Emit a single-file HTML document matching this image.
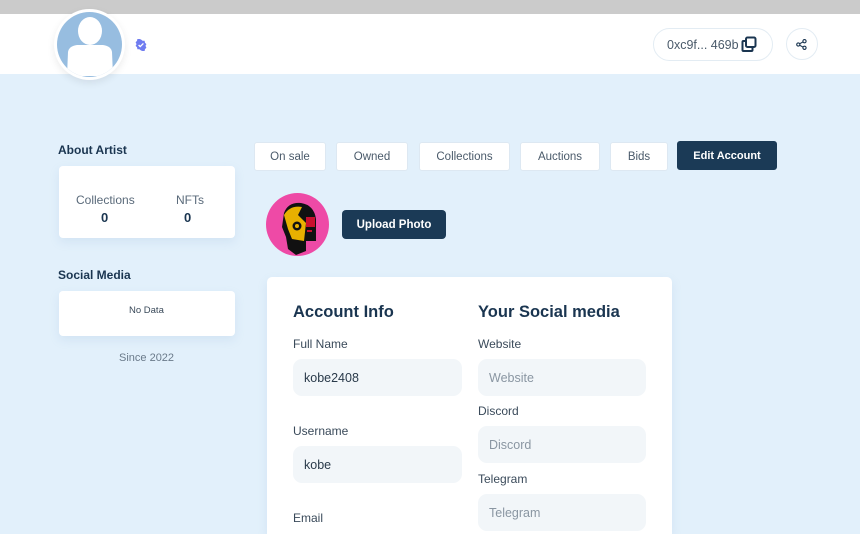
<!DOCTYPE html>
<html><head><meta charset="utf-8"><style>
*{box-sizing:border-box;margin:0;padding:0}
html,body{width:860px;height:534px;overflow:hidden}
body{background:#e2f0fb;font-family:"Liberation Sans",sans-serif;position:relative;color:#1a3550}
.a{position:absolute}
.top{left:0;top:0;width:860px;height:14px;background:#cbcbcb}
.hdr{left:0;top:14px;width:860px;height:60px;background:#fff}
.card{background:#fff;border-radius:4px;box-shadow:0 4px 10px rgba(120,160,200,.15)}
.tab{top:142px;height:29px;background:#fff;border-radius:3px;font-size:11.5px;color:#4a5a6a;display:flex;align-items:center;justify-content:center;border:1px solid #dde8f2}
.lbl{font-size:12px;color:#3a4a5a}
.inp{background:#f2f6f9;border-radius:9px;height:37px;font-size:12.5px;display:flex;align-items:center;padding-left:11px;color:#2a3a4a}
.ph{color:#8a96a2}
</style></head><body>
<div class="a top"></div>
<div class="a hdr"></div>
<div class="a" style="left:54px;top:9px;width:71px;height:71px;border-radius:50%;background:#fff;box-shadow:0 3px 8px rgba(0,0,0,.08)"></div>
<svg class="a" style="left:57px;top:12px" width="65" height="65" viewBox="0 0 65 65"><defs><clipPath id="c"><circle cx="32.5" cy="32.5" r="32.5"/></clipPath></defs><circle cx="32.5" cy="32.5" r="32.5" fill="#97bde0"/><g clip-path="url(#c)" fill="#fff"><ellipse cx="33" cy="19" rx="12" ry="14"/><path d="M10 64 L11 40 Q12 34 20 33 L46 33 Q54 34 55 40 L56 64 Z"/></g></svg>
<svg class="a" style="left:135px;top:39px" width="12" height="12" viewBox="0 0 12 12"><path d="M6 0.5l1.6 1.2 2 .1.4 1.9 1.4 1.4-.9 1.8.9 1.8-1.4 1.4-.4 1.9-2 .1L6 11.5 4.4 10.3l-2-.1-.4-1.9L.6 6.9 1.5 5.1.6 3.3 2 1.9l.4-1.9 2-.1z" fill="#6f7cf0"/><path d="M3.6 6l1.6 1.6 3.2-3.2" stroke="#fff" stroke-width="1.3" fill="none"/></svg>
<div class="a" style="left:653px;top:28px;width:120px;height:33px;border:1px solid #e3ecf3;border-radius:17px;font-size:12.5px;color:#4a5a6a;padding:9px 0 0 13px">0xc9f... 469b</div>
<svg class="a" style="left:741px;top:36px" width="16" height="16" viewBox="0 0 16 16" fill="none" stroke="#1a3550" stroke-width="2"><rect x="5" y="1.5" width="9.5" height="9.5" rx="1.5"/><path d="M5 5H2.5A1 1 0 0 0 1.5 6v8a1 1 0 0 0 1 1h8a1 1 0 0 0 1-1v-3"/></svg>
<div class="a" style="left:786px;top:28px;width:32px;height:32px;border:1px solid #e3ecf3;border-radius:50%"></div>
<svg class="a" style="left:796px;top:39px" width="11" height="11" viewBox="0 0 11 11" fill="none" stroke="#1a3550" stroke-width="1.1"><circle cx="8.5" cy="2.2" r="1.6"/><circle cx="2.3" cy="5.5" r="1.6"/><circle cx="8.5" cy="8.8" r="1.6"/><path d="M3.8 4.7l3.3-1.8M3.8 6.3l3.3 1.8"/></svg>

<div class="a" style="left:58px;top:143px;font-size:12px;font-weight:bold">About Artist</div>
<div class="a card" style="left:59px;top:166px;width:176px;height:72px"></div>
<div class="a lbl" style="left:76px;top:193px;color:#5a6a7a">Collections</div>
<div class="a" style="left:101px;top:210px;font-size:13px;font-weight:bold">0</div>
<div class="a lbl" style="left:176px;top:193px;color:#5a6a7a">NFTs</div>
<div class="a" style="left:184px;top:210px;font-size:13px;font-weight:bold">0</div>
<div class="a" style="left:58px;top:268px;font-size:12px;font-weight:bold">Social Media</div>
<div class="a card" style="left:59px;top:291px;width:176px;height:45px"></div>
<div class="a" style="left:129px;top:305px;font-size:9.5px;color:#3a4a5a">No Data</div>
<div class="a" style="left:119px;top:352px;font-size:11px;color:#6a7a8a">Since 2022</div>

<div class="a tab" style="left:254px;width:72px">On sale</div>
<div class="a tab" style="left:336px;width:72px">Owned</div>
<div class="a tab" style="left:419px;width:91px">Collections</div>
<div class="a tab" style="left:520px;width:80px">Auctions</div>
<div class="a tab" style="left:610px;width:58px">Bids</div>
<div class="a tab" style="left:677px;top:141px;width:100px;background:#1b3a56;border-color:#1b3a56;color:#fff;font-weight:bold;font-size:11px">Edit Account</div>

<svg class="a" style="left:266px;top:193px" width="63" height="63" viewBox="0 0 63 63"><circle cx="31.5" cy="31.5" r="31.5" fill="#ee4aa6"/><path d="M18 20Q22 9 35 10Q48 12 50 26L50 48 40 48 40 58 30 62 22 56 20 44 16 34Z" fill="#111"/><path d="M18 22Q24 12 36 14L32 22 40 30 38 48 26 46 22 36Z" fill="#e8b000"/><circle cx="31" cy="33" r="4.5" fill="#111"/><circle cx="31" cy="33" r="2" fill="#e8b000"/><rect x="40" y="24" width="9" height="10" fill="#c8102e"/><rect x="41" y="37" width="5" height="2" fill="#c8102e"/></svg>
<div class="a" style="left:342px;top:210px;width:104px;height:29px;background:#1b3a56;border-radius:4px;color:#fff;font-size:11.5px;font-weight:bold;display:flex;align-items:center;justify-content:center">Upload Photo</div>

<div class="a card" style="left:267px;top:277px;width:405px;height:257px;border-radius:5px 5px 0 0"></div>
<div class="a" style="left:293px;top:303px;font-size:16.5px;font-weight:bold">Account Info</div>
<div class="a" style="left:478px;top:303px;font-size:16.5px;font-weight:bold">Your Social media</div>
<div class="a lbl" style="left:293px;top:337px">Full Name</div>
<div class="a inp" style="left:293px;top:359px;width:169px">kobe2408</div>
<div class="a lbl" style="left:293px;top:424px">Username</div>
<div class="a inp" style="left:293px;top:446px;width:169px">kobe</div>
<div class="a lbl" style="left:293px;top:511px">Email</div>
<div class="a lbl" style="left:478px;top:337px">Website</div>
<div class="a inp ph" style="left:478px;top:359px;width:168px">Website</div>
<div class="a lbl" style="left:478px;top:404px">Discord</div>
<div class="a inp ph" style="left:478px;top:426px;width:168px">Discord</div>
<div class="a lbl" style="left:478px;top:472px">Telegram</div>
<div class="a inp ph" style="left:478px;top:494px;width:168px">Telegram</div>
</body></html>
